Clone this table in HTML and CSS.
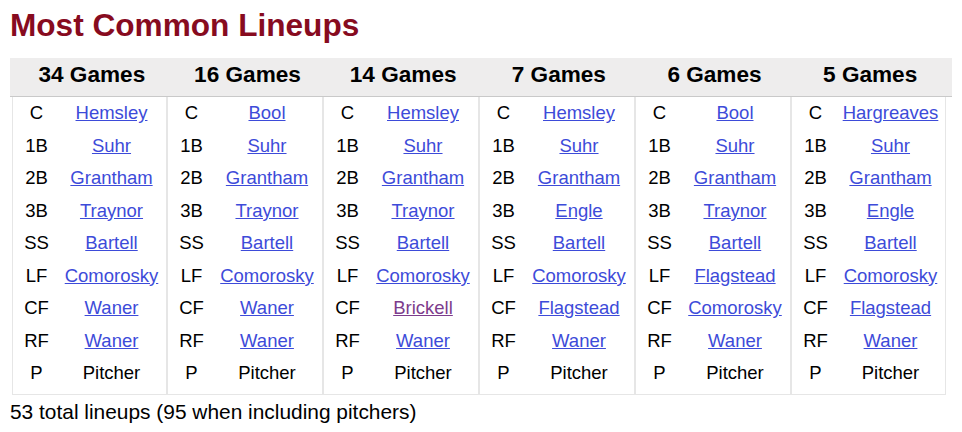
FILE: index.html
```html
<!DOCTYPE html>
<html lang="en">
<head>
<meta charset="utf-8">
<title>Most Common Lineups</title>
<link rel="stylesheet" href="styles.css">
</head>
<body>
<main class="page">
  <h2 class="title">Most Common Lineups</h2>
  <section class="lineups">
    <div class="head">
      <div class="head-cell">34 Games</div>
      <div class="head-cell">16 Games</div>
      <div class="head-cell">14 Games</div>
      <div class="head-cell">7 Games</div>
      <div class="head-cell">6 Games</div>
      <div class="head-cell">5 Games</div>
    </div>
    <div class="grid">
      <div class="col">
        <span class="pos">C</span><a class="name" href="#">Hemsley</a>
        <span class="pos">1B</span><a class="name" href="#">Suhr</a>
        <span class="pos">2B</span><a class="name" href="#">Grantham</a>
        <span class="pos">3B</span><a class="name" href="#">Traynor</a>
        <span class="pos">SS</span><a class="name" href="#">Bartell</a>
        <span class="pos">LF</span><a class="name" href="#">Comorosky</a>
        <span class="pos">CF</span><a class="name" href="#">Waner</a>
        <span class="pos">RF</span><a class="name" href="#">Waner</a>
        <span class="pos">P</span><span class="name">Pitcher</span>
      </div>
      <div class="col">
        <span class="pos">C</span><a class="name" href="#">Bool</a>
        <span class="pos">1B</span><a class="name" href="#">Suhr</a>
        <span class="pos">2B</span><a class="name" href="#">Grantham</a>
        <span class="pos">3B</span><a class="name" href="#">Traynor</a>
        <span class="pos">SS</span><a class="name" href="#">Bartell</a>
        <span class="pos">LF</span><a class="name" href="#">Comorosky</a>
        <span class="pos">CF</span><a class="name" href="#">Waner</a>
        <span class="pos">RF</span><a class="name" href="#">Waner</a>
        <span class="pos">P</span><span class="name">Pitcher</span>
      </div>
      <div class="col">
        <span class="pos">C</span><a class="name" href="#">Hemsley</a>
        <span class="pos">1B</span><a class="name" href="#">Suhr</a>
        <span class="pos">2B</span><a class="name" href="#">Grantham</a>
        <span class="pos">3B</span><a class="name" href="#">Traynor</a>
        <span class="pos">SS</span><a class="name" href="#">Bartell</a>
        <span class="pos">LF</span><a class="name" href="#">Comorosky</a>
        <span class="pos">CF</span><a class="name visited" href="#">Brickell</a>
        <span class="pos">RF</span><a class="name" href="#">Waner</a>
        <span class="pos">P</span><span class="name">Pitcher</span>
      </div>
      <div class="col">
        <span class="pos">C</span><a class="name" href="#">Hemsley</a>
        <span class="pos">1B</span><a class="name" href="#">Suhr</a>
        <span class="pos">2B</span><a class="name" href="#">Grantham</a>
        <span class="pos">3B</span><a class="name" href="#">Engle</a>
        <span class="pos">SS</span><a class="name" href="#">Bartell</a>
        <span class="pos">LF</span><a class="name" href="#">Comorosky</a>
        <span class="pos">CF</span><a class="name" href="#">Flagstead</a>
        <span class="pos">RF</span><a class="name" href="#">Waner</a>
        <span class="pos">P</span><span class="name">Pitcher</span>
      </div>
      <div class="col">
        <span class="pos">C</span><a class="name" href="#">Bool</a>
        <span class="pos">1B</span><a class="name" href="#">Suhr</a>
        <span class="pos">2B</span><a class="name" href="#">Grantham</a>
        <span class="pos">3B</span><a class="name" href="#">Traynor</a>
        <span class="pos">SS</span><a class="name" href="#">Bartell</a>
        <span class="pos">LF</span><a class="name" href="#">Flagstead</a>
        <span class="pos">CF</span><a class="name" href="#">Comorosky</a>
        <span class="pos">RF</span><a class="name" href="#">Waner</a>
        <span class="pos">P</span><span class="name">Pitcher</span>
      </div>
      <div class="col">
        <span class="pos">C</span><a class="name" href="#">Hargreaves</a>
        <span class="pos">1B</span><a class="name" href="#">Suhr</a>
        <span class="pos">2B</span><a class="name" href="#">Grantham</a>
        <span class="pos">3B</span><a class="name" href="#">Engle</a>
        <span class="pos">SS</span><a class="name" href="#">Bartell</a>
        <span class="pos">LF</span><a class="name" href="#">Comorosky</a>
        <span class="pos">CF</span><a class="name" href="#">Flagstead</a>
        <span class="pos">RF</span><a class="name" href="#">Waner</a>
        <span class="pos">P</span><span class="name">Pitcher</span>
      </div>
    </div>
  </section>
  <p class="summary">53 total lineups (95 when including pitchers)</p>
</main>
</body>
</html>
```
FILE: styles.css
```css
html, body {
  margin: 0;
  padding: 0;
  background: #ffffff;
}

body {
  font-family: "Liberation Sans", Arial, Helvetica, sans-serif;
  color: #000000;
}

.page {
  padding: 7px 10px 0 10px;
}

.title {
  margin: 0;
  font-size: 31.6px;
  font-weight: bold;
  line-height: 37px;
  color: #870b1f;
}

.lineups {
  margin-top: 14px;
}

.head {
  display: grid;
  grid-template-columns: repeat(6, 1fr);
  width: 942px;
  box-sizing: border-box;
  padding: 4px 4px 9px 4px;
  background: #eeeded;
  border-bottom: 1px solid #c9c9c9;
}

.head-cell {
  text-align: center;
  font-size: 22.6px;
  font-weight: bold;
  line-height: 25px;
}

.grid {
  display: grid;
  grid-template-columns: 154px repeat(5, 156px);
  width: 934px;
  margin-left: 2px;
}

.col {
  display: grid;
  grid-template-columns: 47px 1fr;
  grid-auto-rows: 32.5px;
  align-items: center;
  padding: 0 3px 4px 0;
  border: 1px solid #e6e6e6;
  border-top: none;
  font-size: 18.5px;
}

.col + .col {
  border-left: 2px solid #e6e6e6;
}

.col:not(:last-child) {
  border-right: none;
}

.pos {
  text-align: center;
}

.name {
  text-align: center;
  justify-self: center;
  color: #000000;
}

a.name {
  color: #3d4bd9;
  text-decoration: underline;
}

a.name.visited {
  color: #7d3c8c;
}

.summary {
  margin: 5px 0 0 0;
  font-size: 20.9px;
  line-height: 23px;
}
```
